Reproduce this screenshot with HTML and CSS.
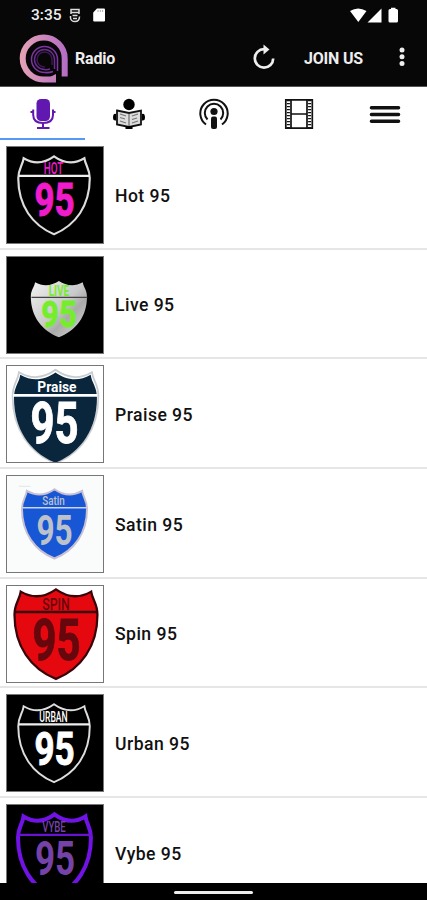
FILE: index.html
```html
<!DOCTYPE html>
<html lang="en">
<head>
<meta charset="utf-8">
<title>Radio</title>
<link rel="stylesheet" href="styles.css">
</head>
<body>
<svg class="defs" width="0" height="0">
  <defs>
    <path id="shield" d="M17 11.500C28 18 39 16 48 9.500C57 16 68 18 79 11.500C80 19 84.500 22 84.500 32C84.500 60 70 80 48 89C26 80 11.500 60 11.500 32C11.500 22 16 19 17 11.500Z"/>
    <linearGradient id="silver" x1="0" y1="0" x2="1" y2="1"><stop offset="0" stop-color="#f2f2f2"/><stop offset=".5" stop-color="#c9c9cb"/><stop offset=".65" stop-color="#aaa"/><stop offset="1" stop-color="#ddd"/></linearGradient>
    <linearGradient id="brand" gradientUnits="userSpaceOnUse" x1="0" y1="0" x2="49" y2="0"><stop offset="0" stop-color="#e6a3b4"/><stop offset="1" stop-color="#b36bc4"/></linearGradient>
  </defs>
</svg>
<div class="screen">
  <header class="top">
    <div class="status">
      <span class="clock">3:35</span>
      <svg class="sync" width="12" height="15" viewBox="0 0 12 15" fill="none" stroke="#ddd" stroke-width="1.5"><path d="M2 6V1.500H10V6M2 4.500H10M3.500 7.500H8.500M1.500 8V10Q2 13.500 6 13.500Q10.500 13.500 10.500 8.500M4 10.500H8"/></svg>
      <svg class="card" width="12" height="14" viewBox="0 0 12 14"><path fill="#fff" d="M4 .5H11Q12 .5 12 1.5V12.5Q12 13.5 11 13.5H1.200Q.2 13.500 .2 12.500V4.500Z"/><path stroke="#aaa" d="M5 2V4M7.300 2V4M9.600 2V4"/></svg>
      <svg class="signals" width="50" height="17" viewBox="0 0 50 17" fill="#fff"><path d="M0 4Q8 -1 16.500 4L8.300 15ZM17.500 15.500L31.500 1.500V15.500ZM38.500 3.500Q38.500 2 40 2H41V.7H45.500V2H46.500Q48 2 48 3.500V14Q48 15.500 46.500 15.500H40Q38.500 15.500 38.500 14Z"/></svg>
    </div>
    <div class="bar">
      <svg class="logo" width="50" height="50" viewBox="0 0 50 50" fill="none">
        <path stroke="url(#brand)" stroke-width="6" d="M37 45.500H24.500A21 21 0 1 1 45.700 24.500V42.500"/>
        <path fill="#c681b8" d="M31 43L37 40V46H31Z"/>
        <g stroke="#7f36a4" stroke-width="1.500"><path d="M34 37.500Q30 39 25.500 38.500A13 13 0 1 1 38.500 25.500V37"/><path stroke="#6b2c8f" d="M31 35Q28 36 25.500 35.500A10 10 0 1 1 35.500 25.500V35"/><path stroke="#3c1853" d="M26 33A7.500 7.500 0 1 1 33 26V31"/></g>
      </svg>
      <h1>Radio</h1>
      <svg class="refresh" width="24" height="26" viewBox="0 0 24 26"><path fill="none" stroke="#eee" stroke-width="2.700" d="M12 5.200A9.200 9.200 0 1 0 21.200 14.500"/><path fill="#eee" d="M11.500 .5L17.500 5.500L11.500 10.500Z"/></svg>
      <span class="join">JOIN US</span>
      <svg class="more" width="6" height="20" viewBox="0 0 6 20" fill="#eee"><circle cx="3" cy="3" r="2.500"/><circle cx="3" cy="9.800" r="2.500"/><circle cx="3" cy="16.600" r="2.500"/></svg>
    </div>
  </header>
  <nav class="tabs">
    <span class="tab active"><svg width="26" height="32" viewBox="0 0 26 32"><rect x="6.500" y="1" width="13.500" height="22" rx="4.500" fill="#6018b0"/><g fill="none" stroke="#6018b0" stroke-width="2"><path d="M3.200 11.500V17Q3.200 25 13 25Q23 25 23 17V11.500M13 25V30M7 30H19.500"/><path d="M.5 14H4M22 14H25.500"/></g></svg></span>
    <span class="tab"><svg width="34" height="32" viewBox="0 0 34 32"><circle cx="17" cy="6.500" r="5.700"/><path fill="#ddd" stroke="#111" stroke-width="1.800" d="M5 12.500L17 15L29 12.500V26.500L17 29L5 26.500Z"/><path fill="none" stroke="#777" stroke-width="1.300" d="M8 16L14 18M8 19.500L13 21M8 23L14 25M20 18L26 16M20 21.500L25 20M20 25L26 23"/><path fill="none" stroke="#555" stroke-width="1" d="M17 16V29"/><path d="M4 16Q1 15 1 20Q1 23 4 22.500ZM30 16Q33 15 33 20Q33 23 30 22.500ZM13.500 28H20.500V31H13.500Z"/></svg></span>
    <span class="tab"><svg width="30" height="32" viewBox="0 0 30 32" fill="none" stroke="#111" stroke-width="2"><path d="M7 26.500A13.700 13.700 0 1 1 23 26.500M8.500 21.500A9.200 9.200 0 1 1 21.500 21.500"/><circle cx="15" cy="13.500" r="3.600" fill="#111" stroke="none"/><rect x="12" y="18.500" width="6" height="12.500" rx="2" fill="#111" stroke="none"/></svg></span>
    <span class="tab"><svg width="30" height="32" viewBox="0 0 30 32" fill="none" stroke="#111"><path stroke-width="1.700" d="M1.800 1.800H28.300V30.200H1.800ZM7 2V30M23 2V30M7 16H23"/><path stroke-width="3" stroke-dasharray="1.300 1.700" d="M4.400 2V30M25.600 2V30"/></svg></span>
    <span class="tab"><svg width="32" height="32" viewBox="0 0 32 32" stroke="#111" stroke-width="3.600" stroke-linecap="round"><path d="M2.500 9.800H29.500M2.500 16.500H29.500M2.500 23.200H29.500"/></svg></span>
  </nav>
  <main class="list">
    <div class="row"><svg class="thumb dark" viewBox="0 0 98 98"><use href="#shield" fill="none" stroke="#ddd" stroke-width="2.200"/><path stroke="#eee" stroke-width="2.500" d="M12 29.500H84.500"/><g fill="#f01ccb"><text class="mid" x="37.500" y="27.500" font-size="16" textLength="20" lengthAdjust="spacingAndGlyphs">HOT</text><text class="num" stroke="#f01ccb" x="28" y="70.500" font-size="48" textLength="41" lengthAdjust="spacingAndGlyphs">95</text></g></svg><span>Hot 95</span></div>
    <div class="row"><svg class="thumb dark" viewBox="0 0 98 98"><use href="#shield" fill="url(#silver)" transform="translate(15.300 17.500) scale(.785 .725)"/><path stroke="#444" stroke-width="1.300" d="M25 41.300H82"/><g fill="#76ed2c"><text x="42.500" y="40" font-size="15" textLength="21" lengthAdjust="spacingAndGlyphs">LIVE</text><text class="num" stroke="#76ed2c" x="35" y="71" font-size="38" textLength="36" lengthAdjust="spacingAndGlyphs">95</text></g></svg><span>Live 95</span></div>
    <div class="row"><svg class="thumb" viewBox="0 0 98 98"><use href="#shield" fill="#fff" stroke="#c9cdd0" stroke-width="1.500" transform="translate(-8.100 -7.500) scale(1.200 1.200)"/><use href="#shield" fill="#09263d" transform="translate(-6.200 -4.500) scale(1.160 1.160)"/><path stroke="#fff" stroke-width="2.700" d="M6 30H92"/><g fill="#fff"><text x="31" y="27" font-size="15.500" textLength="40" lengthAdjust="spacingAndGlyphs">Praise</text><text class="num" stroke="#fff" x="24" y="79" font-size="58" textLength="49" lengthAdjust="spacingAndGlyphs">95</text></g></svg><span>Praise 95</span></div>
    <div class="row"><svg class="thumb pale" viewBox="0 0 98 98"><path stroke="#dfe5e5" d="M12 10.500H24"/><use href="#shield" fill="#1757d5" stroke="#c8bfd3" stroke-width="2.200" transform="translate(4.800 5) scale(.91 .89)"/><path stroke="#ccd5ec" stroke-width="1.500" d="M16 32.300H81"/><g fill="#bdc1ca"><text class="mid" x="36" y="30" font-size="13.500" textLength="23" lengthAdjust="spacingAndGlyphs">Satin</text><text x="30" y="70" font-size="43" textLength="37" lengthAdjust="spacingAndGlyphs">95</text></g></svg><span>Satin 95</span></div>
    <div class="row"><svg class="thumb" viewBox="0 0 98 98"><use href="#shield" fill="#e5090f" stroke="#390409" stroke-width="2" transform="translate(-5.700 -7.500) scale(1.160 1.150)"/><path stroke="#390409" stroke-width="2.500" d="M8 26.500H92"/><g fill="#65070d"><text class="mid" x="36" y="24" font-size="17.500" textLength="28" lengthAdjust="spacingAndGlyphs">SPIN</text><text class="num" stroke="#65070d" x="26" y="75.500" font-size="58" textLength="49" lengthAdjust="spacingAndGlyphs">95</text></g></svg><span>Spin 95</span></div>
    <div class="row"><svg class="thumb dark" viewBox="0 0 98 98"><use href="#shield" fill="none" stroke="#ddd" stroke-width="2"/><path stroke="#eee" stroke-width="2.500" d="M12 30H84.500"/><g fill="#fff"><text class="mid" x="33" y="28" font-size="15" textLength="29" lengthAdjust="spacingAndGlyphs">URBAN</text><text class="num" stroke="#fff" x="28" y="71.500" font-size="48" textLength="41" lengthAdjust="spacingAndGlyphs">95</text></g></svg><span>Urban 95</span></div>
    <div class="row"><svg class="thumb dark" viewBox="0 0 98 98"><use href="#shield" fill="none" stroke="#7213e6" stroke-width="4" transform="translate(-.5 -.5) scale(1.020 1.060)"/><path stroke="#6812d2" stroke-width="2.500" d="M12 30.500H86"/><g fill="#7542a8"><text class="mid" x="36" y="28" font-size="15.500" textLength="24" lengthAdjust="spacingAndGlyphs">VYBE</text><text x="28.500" y="71" font-size="49" textLength="41" lengthAdjust="spacingAndGlyphs">95</text></g></svg><span>Vybe 95</span></div>
  </main>
  <footer class="nav"><i></i></footer>
</div>
</body>
</html>
```

FILE: styles.css
```css
* { box-sizing: border-box; }
body { margin: 0; font-family: Roboto, sans-serif; background: #fff; }
.defs { display: block; }
.screen { width: 427px; height: 900px; display: flex; flex-direction: column; overflow: hidden; }
.top { flex: none; height: 87px; background: #070707; color: #eee; border-bottom: 1px solid #555; }
.status { height: 30px; display: flex; align-items: center; padding: 0 27px 0 31px; }
.clock { font-size: 15.500px; font-weight: 500; width: 38px; white-space: nowrap; }
.card { margin-left: 12px; }
.signals { margin-left: auto; }
.bar { height: 56px; display: flex; align-items: center; padding: 0 22px 0 19px; }
.logo { margin-top: 1px; }
h1 { margin: 0 0 0 6px; width: 177px; font-size: 16px; font-weight: 700; letter-spacing: -.2px; }
.refresh { margin-top: -3px; }
.join { margin-left: 28px; width: 84px; font-size: 16px; font-weight: 700; white-space: nowrap; letter-spacing: -.2px; }
.more { margin: -2px 0 0 11px; flex: none; }
.tabs { flex: none; height: 53px; display: grid; grid-template-columns: repeat(5, 1fr); }
.tab { display: flex; justify-content: center; padding: 11px 0 0 1px; border-bottom: 2px solid transparent; }
.tab.active { border-color: #559af2; }
.list { height: 743px; overflow: hidden; }
.row { height: 109.700px; display: flex; align-items: flex-start; padding: 6px 6px 0; border-bottom: 2px solid #e6e6e6; }
.thumb { width: 98px; height: 98px; flex: none; border: 1px solid #777; background: #fff; font-family: Roboto, sans-serif; font-weight: 700; }
.thumb.dark { background: #000; }
.thumb.pale { background: #f9fcfb; }
.thumb .mid { font-weight: 500; }
.thumb .num { stroke-width: 1px; }
.row span { margin: 38.500px 0 0 11px; font-size: 17.600px; line-height: 23px; font-weight: 500; color: #111; letter-spacing: .45px; }
.nav { flex: none; height: 17px; background: #000; display: flex; justify-content: center; padding-top: 8px; }
.nav i { width: 79px; height: 3px; border-radius: 2px; background: #eee; }
```
